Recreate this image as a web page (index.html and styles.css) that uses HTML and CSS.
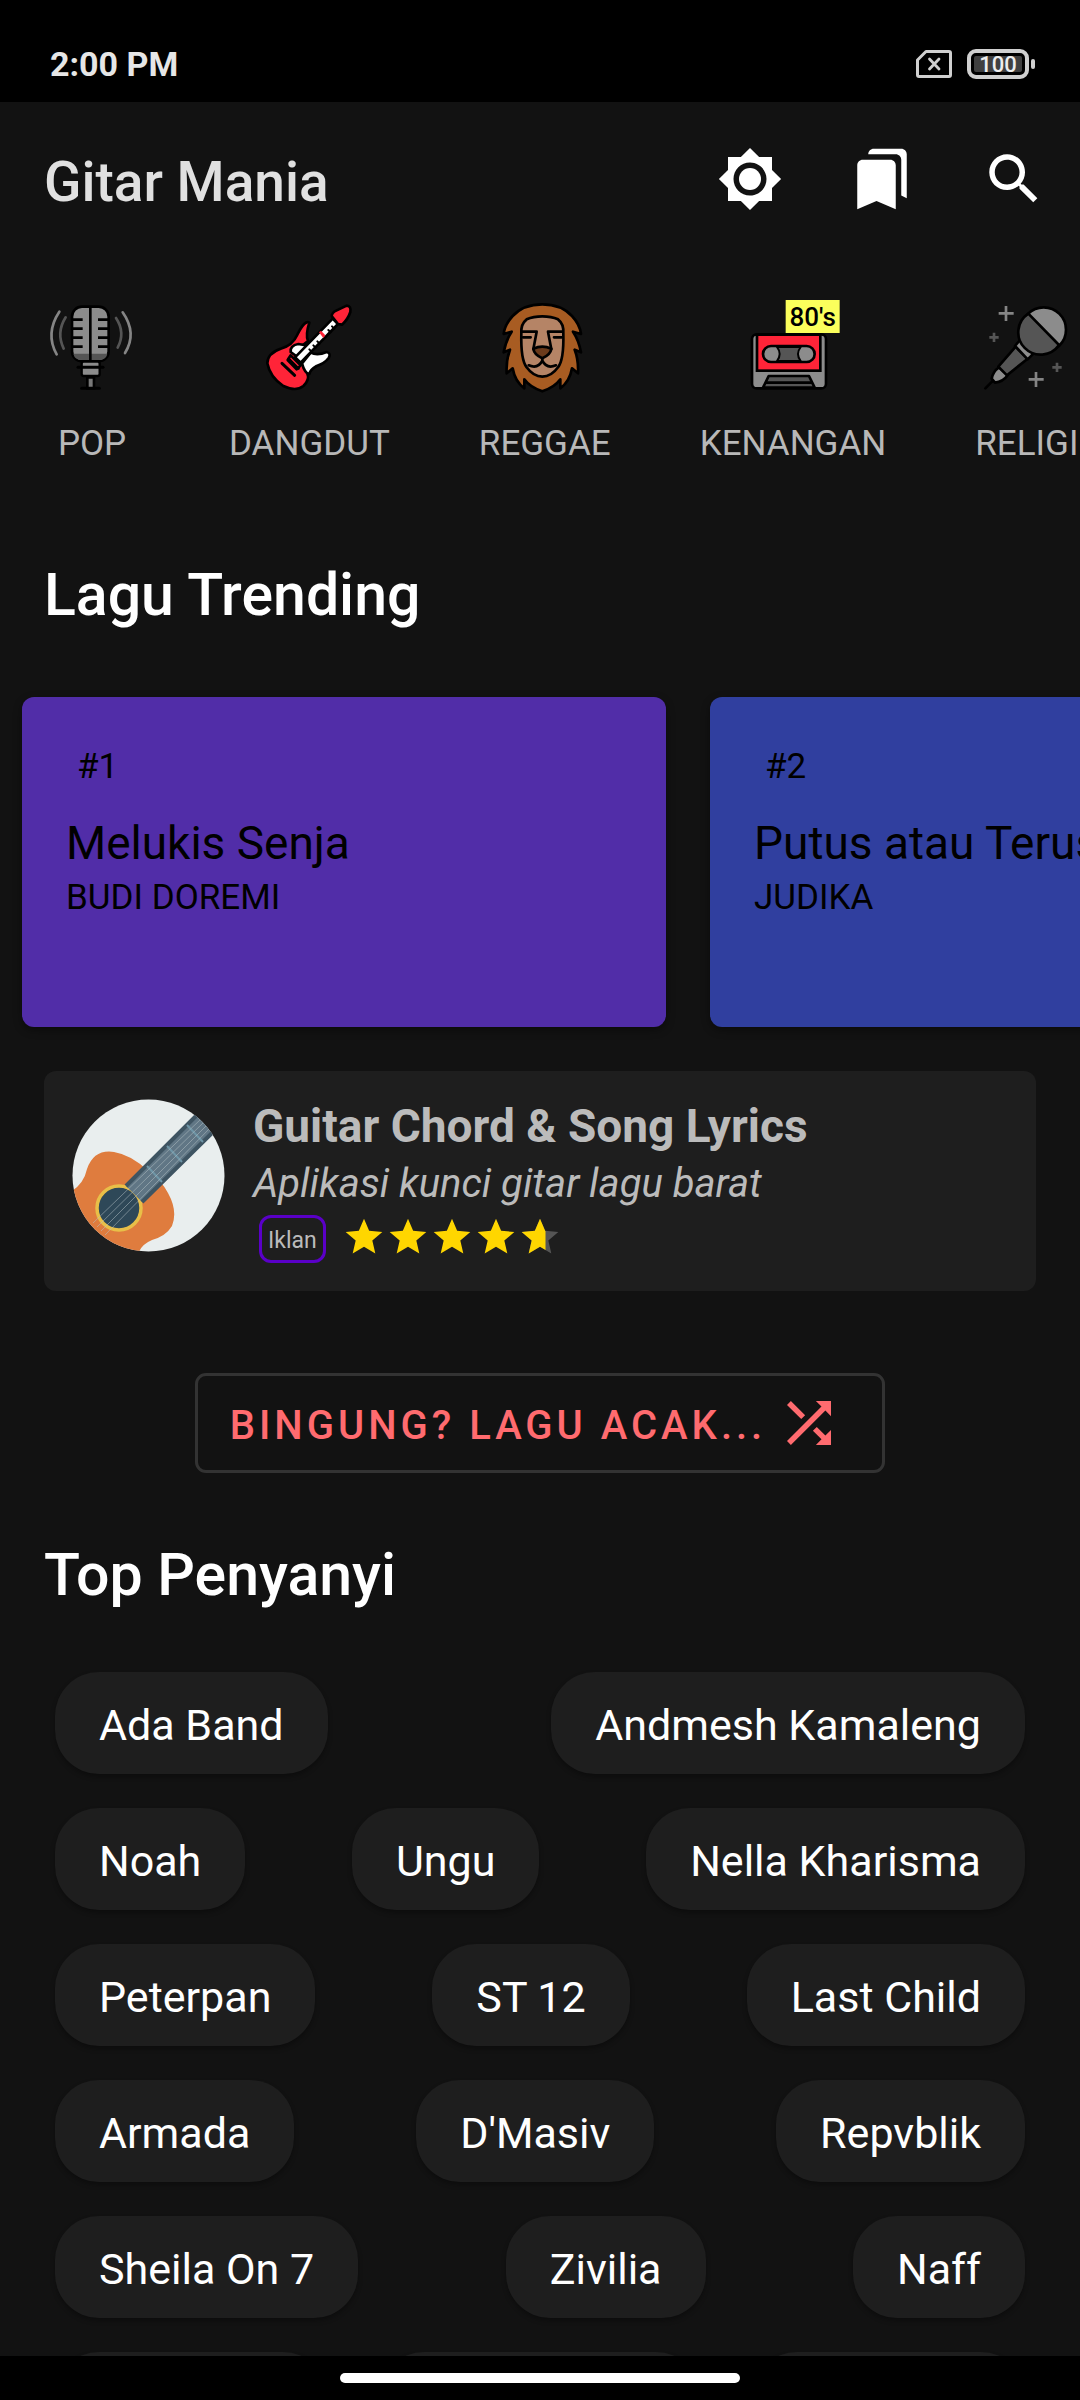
FILE: index.html
```html
<!DOCTYPE html>
<html lang="id">
<head>
<meta charset="utf-8">
<meta name="viewport" content="width=device-width, initial-scale=1">
<title>Gitar Mania</title>
<link rel="stylesheet" href="styles.css">
</head>
<body>
<div class="status">
  <span class="clock">2:00 PM</span>
  <div class="status-icons">
    <svg class="sim" viewBox="0 0 36 28" aria-hidden="true"><path d="M10 1.5H33Q34.500 1.500 34.500 3V25Q34.500 26.500 33 26.500H3Q1.500 26.500 1.500 25V10Z" fill="none" stroke="#d0d0d0" stroke-width="3" stroke-linejoin="round"/><path d="M13.500 9L23 19M23 9L13.500 19" stroke="#d0d0d0" stroke-width="2.800" stroke-linecap="round"/></svg>
    <div class="battery"><span class="level">100</span></div>
  </div>
</div>

<header class="appbar">
  <h1>Gitar Mania</h1>
  <button class="action" type="button" aria-label="Tema"><svg viewBox="0 0 24 24"><path fill-rule="evenodd" d="M20 15.310L23.310 12 20 8.690V4h-4.690L12 .690 8.690 4H4v4.690L.690 12 4 15.310V20h4.690L12 23.310 15.310 20H20v-4.690zM12 18c-3.310 0-6-2.690-6-6s2.690-6 6-6 6 2.690 6 6-2.690 6-6 6z"/><circle cx="12" cy="12" r="4"/></svg></button>
  <button class="action" type="button" aria-label="Favorit"><svg viewBox="0 0 24 24"><path d="M19 18l2 1V3c0-1.100-.900-2-2-2H8.990C7.890 1 7 1.900 7 3h10c1.100 0 2 .900 2 2v13zM15 5H5c-1.100 0-2 .900-2 2v16l7-3 7 3V7c0-1.100-.900-2-2-2z"/></svg></button>
  <button class="action" type="button" aria-label="Cari"><svg viewBox="0 0 24 24"><path d="M15.500 14h-.790l-.280-.270C15.410 12.590 16 11.110 16 9.500 16 5.910 13.090 3 9.500 3S3 5.910 3 9.500 5.910 16 9.500 16c1.610 0 3.090-.590 4.230-1.570l.270.280v.790l5 4.990L20.490 19l-4.990-5zm-6 0C7.010 14 5 11.990 5 9.500S7.010 5 9.500 5 14 7.010 14 9.500 11.990 14 9.500 14z"/></svg></button>
</header>

<main class="content">
  <nav class="genres" aria-label="Genre">
    <a class="genre" href="#pop">
      <svg viewBox="72 54 288 276" aria-hidden="true">
        <g fill="none" stroke-linecap="round" stroke-width="8">
          <path d="M118 95Q75 160 110 223M308 97Q352 160 315 219" stroke="#858585"/>
          <path d="M137 112Q108 158 131 206M288 114Q317 158 293 203" stroke="#555"/>
        </g>
        <rect x="156" y="80" width="110" height="164" rx="30" fill="#8c8c8c" stroke="#000" stroke-width="8"/>
        <path d="M160 221H262Q258 240 236 240H186Q164 240 160 221Z" fill="#555"/>
        <path d="M211 82V242M158 119H188M158 146H188M158 173H188M158 200H188M234 119H264M234 146H264M234 173H264M234 200H264" stroke="#000" stroke-width="8"/>
        <rect x="185" y="245" width="54" height="43" rx="6" fill="#8c8c8c" stroke="#000" stroke-width="7"/>
        <path d="M174 262H249" stroke="#000" stroke-width="9" stroke-linecap="round"/>
        <path d="M202 292H222V325H202Z" fill="#777" stroke="#000" stroke-width="8"/>
        <path d="M185 325H238" stroke="#000" stroke-width="9" stroke-linecap="round"/>
      </svg>
      <span>POP</span>
    </a>
    <a class="genre" href="#dangdut">
      <svg viewBox="723 54 288 276" aria-hidden="true">
        <g stroke="#000" stroke-width="8" stroke-linejoin="round" stroke-linecap="round">
          <path d="M868 128Q855 118 832 164Q818 196 782 206Q742 220 742 250Q750 292 790 318Q828 336 850 318Q870 300 862 280L830 210L864 183Q856 165 868 128Z" fill="#ff2438"/>
          <path d="M812 216Q810 196 835 192L860 196L845 240Z" fill="#fff"/>
          <path d="M872 218Q892 228 920 216Q934 220 926 234Q914 250 890 258Q870 270 868 282Q854 280 846 250Z" fill="#fff"/>
          <path d="M825 232L938 116L954 132L842 248Z" fill="#fff"/>
          <path d="M938 112Q930 106 944 94L980 77Q994 78 991 96Q984 118 966 134L954 132Z" fill="#ff2438"/>
          <path d="M812 226L842 256L830 268L803 240Z" fill="#ff2438"/>
          <path d="M786 250L824 286" fill="none" stroke-width="9"/>
          <path d="M806 236L836 266" fill="none" stroke-width="7"/>
          <path d="M936 139L943 146M925 150L932 157M892 184L899 191M880 196L887 203M868 208L875 215" fill="none" stroke-width="6"/>
        </g>
        <path d="M897 157L903 152L916 166L910 174Z" fill="#ff2438"/>
      </svg>
      <span>DANGDUT</span>
    </a>
    <a class="genre" href="#reggae">
      <svg viewBox="351 54 288 276" aria-hidden="true">
        <g stroke="#000" stroke-width="8" stroke-linejoin="round" stroke-linecap="round">
          <path d="M487 73Q430 73 398 108Q374 134 371 162L395 155Q378 180 371 217L390 209Q378 240 380 280L398 265Q405 305 433 325V298Q450 322 487 334Q524 322 541 298V325Q569 305 576 265L594 280Q596 240 584 209L603 217Q596 180 579 155L603 162Q600 134 576 108Q544 73 487 73Z" fill="#a85c22"/>
          <path d="M424 160Q422 132 440 118Q460 109 487 109Q514 109 534 118Q552 132 550 160Q552 240 534 262Q514 290 487 290Q460 290 440 262Q422 240 424 160Z" fill="#b58466"/>
          <path d="M427 155H470L460 208M547 155H504L514 208M429 172H452M522 172H545" fill="none"/>
          <path d="M460 206Q487 194 514 206Q512 224 487 235Q462 224 460 206Z" fill="#6b3a1b"/>
          <path d="M487 236V244M487 242Q474 268 446 256M487 242Q500 268 528 256" fill="none"/>
        </g>
      </svg>
      <span>REGGAE</span>
    </a>
    <a class="genre" href="#kenangan">
      <svg viewBox="76 54 288 276" aria-hidden="true">
        <rect x="97" y="163" width="222" height="162" rx="14" fill="#8c8c8c" stroke="#000" stroke-width="8"/>
        <rect x="112" y="164" width="190" height="108" fill="#ff2438" stroke="#000" stroke-width="8"/>
        <rect x="130" y="198" width="155" height="48" rx="24" fill="#8c8c8c" stroke="#000" stroke-width="8"/>
        <path d="M172 201Q188 222 172 243H243Q227 222 243 201Z" fill="#555" stroke="#000" stroke-width="6"/>
        <path d="M130 323L147 288H268L285 323Z" fill="#555" stroke="#000" stroke-width="8" stroke-linejoin="round"/>
        <path d="M138 308H278" stroke="#000" stroke-width="8"/>
        <rect x="198" y="60" width="162" height="99" fill="#fbff5c"/>
        <text class="decade" x="279" y="138" text-anchor="middle">80's</text>
      </svg>
      <span>KENANGAN</span>
    </a>
    <a class="genre" href="#religi">
      <svg viewBox="778 54 288 276" aria-hidden="true">
        <g stroke="#000" stroke-width="8" stroke-linejoin="round">
          <path d="M797 325L826 296" stroke-linecap="round"/>
          <path d="M838 262L864 286Q850 306 826 308L816 296Q820 274 838 262Z" fill="#8c8c8c"/>
          <path d="M888 200L924 236L862 286L836 260Z" fill="#555"/>
          <path d="M906 174L946 216L924 238L886 198Z" fill="#8c8c8c"/>
          <circle cx="972" cy="149" r="67" fill="#8c8c8c"/>
          <path d="M926 101A67 67 0 1 0 1018 195Z" fill="#555"/>
        </g>
        <path d="M859 78V123M837 100H882M949 276V321M927 298H972" stroke="#858585" stroke-width="8"/>
        <path d="M823 158V186M809 172H837M1012 248V276M998 262H1026" stroke="#555" stroke-width="8"/>
      </svg>
      <span>RELIGI</span>
    </a>
  </nav>

  <section class="trending">
    <h2>Lagu Trending</h2>
    <div class="cards">
      <a class="card violet" href="#melukis-senja">
        <span class="rank">#1</span>
        <span class="song">Melukis Senja</span>
        <span class="artist">BUDI DOREMI</span>
      </a>
      <a class="card indigo" href="#putus-atau-terus">
        <span class="rank">#2</span>
        <span class="song">Putus atau Terus</span>
        <span class="artist">JUDIKA</span>
      </a>
    </div>
  </section>

  <a class="promo" href="#promo">
    <svg class="avatar" viewBox="0 0 153 153" aria-hidden="true">
      <defs><clipPath id="disc"><circle cx="76.500" cy="76.500" r="76"/></clipPath></defs>
      <g clip-path="url(#disc)">
        <rect width="153" height="153" fill="#e9eeee"/>
        <path d="M0 92Q12 84 15 70Q22 50 42 53Q60 56 76 72Q90 82 96 94Q106 112 100 127Q94 137 80 141Q68 146 66 156H0Z" fill="#df7c3e"/>
        <circle cx="47" cy="109" r="22" fill="#2f4858" stroke="#e8bf48" stroke-width="3.500"/>
        <path d="M126 15L142 32L70 103L54 87Z" fill="#607785"/>
        <path d="M126 15L54 87M142 32L70 103" stroke="#3f5563" stroke-width="4"/>
        <path d="M115 26L131 43M95 47L110 63M75 67L90 83" stroke="#6f95a6" stroke-width="2"/>
        <path d="M130 19L21 124M133 22L25 128M136 25L29 132M139 28L33 136" stroke="#b7c3c8" stroke-width="1" opacity=".5"/>
      </g>
    </svg>
    <span class="promo-text">
      <strong>Guitar Chord &amp; Song Lyrics</strong>
      <em>Aplikasi kunci gitar lagu barat</em>
      <span class="promo-meta">
        <span class="badge">Iklan</span>
        <svg class="stars" viewBox="0 0 120 24" role="img" aria-label="4,5 dari 5">
          <defs>
            <path id="star" d="M12 17.270L18.180 21l-1.640-7.030L22 9.240l-7.190-.610L12 2 9.190 8.630 2 9.240l5.460 4.730L5.820 21z"/>
            <clipPath id="rated"><rect width="111" height="24"/></clipPath>
          </defs>
          <use href="#star" x="96" fill="#555"/>
          <g fill="#ffd600" clip-path="url(#rated)"><use href="#star"/><use href="#star" x="24"/><use href="#star" x="48"/><use href="#star" x="72"/><use href="#star" x="96"/></g>
        </svg>
      </span>
    </span>
  </a>

  <button class="shuffle" type="button"><span>BINGUNG? LAGU ACAK...</span>
    <svg viewBox="0 0 24 24" aria-hidden="true"><path d="M10.590 9.170L5.410 4 4 5.410l5.170 5.170 1.420-1.410zM14.500 4l2.040 2.040L4 18.590 5.410 20 17.960 7.460 20 9.500V4h-5.500zm.330 9.410l-1.410 1.410 3.130 3.130L14.500 20H20v-5.500l-2.040 2.040-3.130-3.130z"/></svg>
  </button>

  <section class="singers">
    <h2>Top Penyanyi</h2>
    <div class="row"><a class="chip" href="#s">Ada Band</a><a class="chip" href="#s">Andmesh Kamaleng</a></div>
    <div class="row"><a class="chip" href="#s">Noah</a><a class="chip" href="#s">Ungu</a><a class="chip" href="#s">Nella Kharisma</a></div>
    <div class="row"><a class="chip" href="#s">Peterpan</a><a class="chip" href="#s">ST 12</a><a class="chip" href="#s">Last Child</a></div>
    <div class="row"><a class="chip" href="#s">Armada</a><a class="chip" href="#s">D'Masiv</a><a class="chip" href="#s">Repvblik</a></div>
    <div class="row"><a class="chip" href="#s">Sheila On 7</a><a class="chip" href="#s">Zivilia</a><a class="chip" href="#s">Naff</a></div>
    <div class="row" aria-hidden="true"><span class="chip medium"></span><span class="chip wide"></span><span class="chip medium"></span></div>
  </section>
</main>

<footer class="gesture"><span class="handle"></span></footer>
</body>
</html>
```
FILE: styles.css
```css
* { box-sizing: border-box; }

body {
  margin: 0;
  height: 100vh;
  display: flex;
  flex-direction: column;
  overflow: hidden;
  background: #121212;
  color: #fff;
  font-family: Roboto, "Liberation Sans", sans-serif;
}

a { color: inherit; text-decoration: none; }
button { font: inherit; cursor: pointer; }
h1, h2 { margin: 0; font-weight: 500; }
svg { display: block; flex: none; }

/* status bar */
.status {
  flex: none;
  display: flex;
  justify-content: space-between;
  align-items: center;
  height: 102px;
  padding: 26px 45px 0 50px;
  background: #000;
}
.clock { font-size: 34px; line-height: 44px; font-weight: 700; color: #e6e6e6; }
.status-icons { display: flex; align-items: center; gap: 15px; }
.sim { width: 36px; height: 28px; }
.battery {
  display: flex;
  align-items: center;
  width: 68px;
  height: 30px;
}
.battery::after {
  content: "";
  width: 4px;
  height: 10px;
  margin-left: 2px;
  border-radius: 2px;
  background: #d0d0d0;
}
.level {
  width: 62px;
  height: 30px;
  padding: 3px;
  border: 4px solid #d0d0d0;
  border-radius: 9px;
  background: #404040 content-box;
  font-size: 22px;
  line-height: 18px;
  font-weight: 500;
  text-align: center;
  color: #eee;
}

/* app bar */
.appbar {
  flex: none;
  display: flex;
  align-items: center;
  height: 154px;
  padding-left: 44px;
}
.appbar h1 {
  flex: 1;
  padding-top: 6px;
  font-size: 55px;
  line-height: 64px;
  color: #e0e0e0;
}
.action {
  width: 132px;
  height: 132px;
  padding: 33px;
  border: 0;
  background: none;
}
.action svg { width: 66px; height: 66px; fill: #fff; }

.content { flex: 1; min-height: 0; overflow: hidden; }

/* genre strip */
.genres { display: flex; gap: 89px; padding: 42px 44px 0; overflow: hidden; }
.genre {
  flex: none;
  display: flex;
  flex-direction: column;
  align-items: center;
  gap: 32px;
  font-size: 35px;
  line-height: 44px;
  color: #b8b8b8;
}
.genre svg { width: 96px; height: 92px; overflow: visible; }
.decade { font-size: 78px; font-weight: 500; fill: #000; }

h2 { padding: 0 44px; font-size: 59px; line-height: 72px; }

/* trending cards */
.trending { margin-top: 93px; }
.cards { display: flex; gap: 44px; padding: 66px 22px 44px; overflow: hidden; }
.card {
  flex: none;
  display: flex;
  flex-direction: column;
  width: 644px;
  min-height: 330px;
  padding: 48px 44px;
  border-radius: 12px;
  box-shadow: 0 3px 8px rgba(0, 0, 0, .4);
  color: #000;
  white-space: nowrap;
}
.violet { background: #512da8; }
.indigo { background: #303f9f; }
.rank { padding-left: 11px; font-size: 35px; line-height: 44px; }
.song { margin-top: 27px; font-size: 46px; line-height: 54px; }
.artist { margin-top: 6px; font-size: 35px; line-height: 44px; }

/* promo */
.promo {
  display: flex;
  gap: 28px;
  margin: 0 44px;
  padding: 28px;
  border-radius: 12px;
  background: #1e1e1e;
  color: #bbb;
}
.avatar { width: 153px; height: 153px; }
.promo-text { display: flex; flex-direction: column; gap: 8px; }
.promo strong { font-size: 46px; line-height: 54px; }
.promo em { font-size: 40px; line-height: 46px; }
.promo-meta { display: flex; gap: 16px; padding-left: 6px; }
.badge {
  height: 48px;
  padding: 0 6px;
  border: 3px solid #5a00c8;
  border-radius: 12px;
  font-size: 23px;
  line-height: 46px;
}
.stars { width: 220px; height: 44px; }

/* random song */
.shuffle {
  display: flex;
  align-items: center;
  gap: 10px;
  height: 100px;
  margin: 82px auto 0;
  padding: 0 40px 0 32px;
  border: 3px solid #333;
  border-radius: 11px;
  background: none;
  color: #ff6b6f;
  font-size: 40px;
  font-weight: 500;
  letter-spacing: 4px;
}
.shuffle span { padding-top: 4px; }
.shuffle svg { width: 66px; height: 66px; fill: currentColor; }

/* singers */
.singers { margin-top: 66px; }
.singers h2 { margin-bottom: 61px; }
.row {
  display: flex;
  justify-content: space-between;
  margin: 0 55px 34px;
}
.chip {
  height: 102px;
  padding: 0 44px;
  border-radius: 44px;
  background: #1e1e1e;
  box-shadow: 0 3px 5px rgba(0, 0, 0, .3);
  font-size: 43px;
  line-height: 106px;
}
.medium { width: 272px; }
.wide { width: 320px; }

/* gesture bar */
.gesture {
  flex: none;
  display: flex;
  justify-content: center;
  align-items: center;
  height: 44px;
  background: #000;
}
.handle { width: 37%; height: 10px; border-radius: 5px; background: #fff; }
```
